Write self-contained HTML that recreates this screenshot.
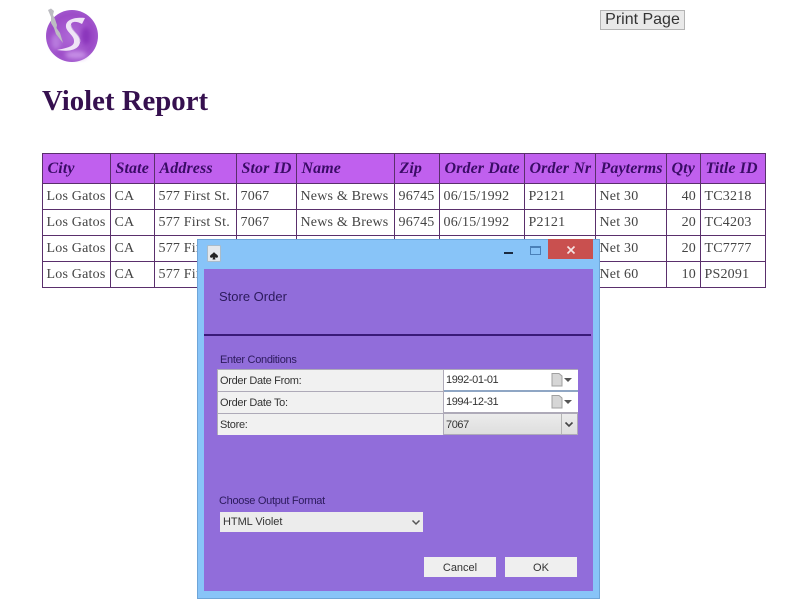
<!DOCTYPE html>
<html><head><meta charset="utf-8"><title>Violet Report</title>
<style>
html,body{margin:0;padding:0;background:#fff;width:800px;height:600px;overflow:hidden}
body{position:relative;font-family:"Liberation Serif",serif;filter:blur(.35px)}
.a{position:absolute;white-space:nowrap}
h1{position:absolute;left:42px;top:85px;margin:0;font:bold 28.8px/32px "Liberation Serif",serif;color:#36104f;white-space:nowrap}
.print{position:absolute;left:600px;top:10px;width:83px;height:18px;background:#e9e9e9;border:1px solid #b4b4b4;font:16px/18px "Liberation Sans",sans-serif;color:#333;text-align:center}
table{position:absolute;left:42px;top:153px;border-collapse:collapse;table-layout:fixed;width:723px;font-size:14px;color:#444}
td,th{border:1px solid #5a2f6c;padding:0 0 0 3.5px;white-space:nowrap;overflow:hidden;text-align:left;height:25px;line-height:25px;letter-spacing:.2px}
th{background:#c060ee;color:#3a0c66;font-style:italic;font-weight:bold;font-size:16px;height:28.5px;letter-spacing:.1px;padding-left:4.5px}
td.r{text-align:right;padding:0 4px 0 0}
.dlg{position:absolute;left:197px;top:239px;width:401px;height:358px;background:#88c4f8;border:1px solid #6ea5d8}
.in{position:absolute;left:6px;top:29px;width:389px;height:322px;background:#916dda}
.s{font-family:"Liberation Sans",sans-serif;color:#2c1a5c}
.box{position:absolute;left:217px;top:369px;width:361px;height:66px;background:#aeaab8}
.row{position:absolute;left:218px;width:224.5px;height:21px;background:#f1f1f1;font:11px/23px "Liberation Sans",sans-serif;letter-spacing:-.3px;color:#333;text-indent:2px;overflow:hidden}
.val{position:absolute;left:444px;width:134px;height:20px;background:#fff;font:11px/21px "Liberation Sans",sans-serif;letter-spacing:-.4px;color:#333;text-indent:2px;overflow:hidden}
.btn{position:absolute;top:557px;height:20px;width:72px;background:#efefef;border:0;font:11px/22px "Liberation Sans",sans-serif;color:#333;text-align:center}
</style></head><body>

<svg class="a" style="left:42px;top:6px" width="60" height="60" viewBox="0 0 60 60">
<defs>
<radialGradient id="g" cx="50%" cy="50%" r="55%"><stop offset="0" stop-color="#b06ad8"/><stop offset=".75" stop-color="#9d4cc8"/><stop offset="1" stop-color="#a25ccf"/></radialGradient>
<filter id="b"><feGaussianBlur stdDeviation="2.5"/></filter>
</defs>
<circle cx="30" cy="30" r="26" fill="url(#g)"/>
<g filter="url(#b)"><ellipse cx="34" cy="49" rx="11" ry="4" fill="#c68fe6"/><ellipse cx="44" cy="30" rx="5" ry="9" fill="#8a35bb"/><ellipse cx="14" cy="36" rx="5" ry="8" fill="#b87ade"/></g>
<path d="M6 4 L9 2.5 L12 5 L11 9 L13 13 L15 19 L14.5 22 L18 27 L21 37 L14 28 L12 22 L9 17 L9 11 Z" fill="#bdbdc2"/>
<path d="M43 12 C34 11 25 13 24 19 C23 26 33 29 32 36 C31.5 41 24 42 15 44 C27 46 37 44 38 36 C39 29 29 25 29 19 C29 15 35 15 40 18 Z" fill="#efe4f6"/>
<path d="M29 19 C29 25 39 29 38 36" fill="none" stroke="#c9a7e0" stroke-width=".8"/>
</svg>

<h1>Violet Report</h1>
<div class="print">Print Page</div>

<table>
<colgroup><col style="width:68px"><col style="width:44px"><col style="width:82px"><col style="width:60px"><col style="width:98px"><col style="width:45px"><col style="width:85px"><col style="width:71px"><col style="width:71px"><col style="width:34px"><col style="width:65px"></colgroup>
<tr><th>City</th><th>State</th><th>Address</th><th>Stor ID</th><th>Name</th><th>Zip</th><th>Order Date</th><th>Order Nr</th><th>Payterms</th><th>Qty</th><th>Title ID</th></tr>
<tr><td>Los Gatos</td><td>CA</td><td>577 First St.</td><td>7067</td><td>News &amp; Brews</td><td>96745</td><td>06/15/1992</td><td>P2121</td><td>Net 30</td><td class="r">40</td><td>TC3218</td></tr>
<tr><td>Los Gatos</td><td>CA</td><td>577 First St.</td><td>7067</td><td>News &amp; Brews</td><td>96745</td><td>06/15/1992</td><td>P2121</td><td>Net 30</td><td class="r">20</td><td>TC4203</td></tr>
<tr><td>Los Gatos</td><td>CA</td><td>577 First St.</td><td>7067</td><td>News &amp; Brews</td><td>96745</td><td>06/15/1992</td><td>P2121</td><td>Net 30</td><td class="r">20</td><td>TC7777</td></tr>
<tr><td>Los Gatos</td><td>CA</td><td>577 First St.</td><td>7067</td><td>News &amp; Brews</td><td>96745</td><td>06/15/1992</td><td>P2121</td><td>Net 60</td><td class="r">10</td><td>PS2091</td></tr>
</table>

<div class="dlg"><div class="in"></div></div>

<!-- title bar -->
<svg class="a" style="left:207px;top:245px" width="15" height="18" viewBox="0 0 15 18">
<rect x=".5" y=".5" width="13" height="16" rx="1" fill="#e4e8ec" stroke="#a9bccb"/>
<path d="M7 7 C8 9 11 9.500 11 11.500 C11 13 9 13 7.800 12.300 L8.500 14.500 L5.500 14.500 L6.200 12.300 C5 13 3 13 3 11.500 C3 9.500 6 9 7 7 Z" fill="#222"/>
</svg>
<div class="a" style="left:504px;top:252px;width:9px;height:2px;background:#1a2a40"></div>
<div class="a" style="left:530px;top:246px;width:9px;height:6px;border:1px solid #4a80b8;border-top-width:2px"></div>
<div class="a" style="left:548px;top:239px;width:45px;height:20px;background:#c9504f"></div>
<svg class="a" style="left:566px;top:245px" width="10" height="10" viewBox="0 0 10 10"><path d="M1.500 1.500 L8.500 8.500 M8.500 1.500 L1.500 8.500" stroke="#f6e4e4" stroke-width="1.6"/></svg>

<div class="a s" style="left:219px;top:289px;font-size:13px;line-height:15px">Store Order</div>
<div class="a" style="left:204px;top:334px;width:387px;height:1.5px;background:#3a1a78"></div>
<div class="a s" style="left:220px;top:353px;font-size:11px;line-height:14px;letter-spacing:-.3px">Enter Conditions</div>

<div class="box"></div>
<div class="row" style="top:370px">Order Date From:</div>
<div class="row" style="top:392px">Order Date To:</div>
<div class="row" style="top:414px">Store:</div>

<div class="val" style="top:370px">1992-01-01</div>
<div class="val" style="top:392px">1994-12-31</div>
<div class="val" style="top:414px;height:20px;width:133px;background:linear-gradient(#ececec,#dedede);line-height:22px">7067</div>
<div class="a" style="left:444px;top:389.500px;width:134px;height:2px;background:#8fa6c4"></div>
<div class="a" style="left:561px;top:414px;width:1px;height:20px;background:#b5b5b5"></div>

<svg class="a" style="left:550px;top:372px" width="26" height="16" viewBox="0 0 26 16"><path d="M2 1.500 H9 L12 4 V14 H2 Z" fill="#d6d6d6" stroke="#a0a0a0"/><path d="M14 6 L22 6 L18 10 Z" fill="#555"/></svg>
<svg class="a" style="left:550px;top:394px" width="26" height="16" viewBox="0 0 26 16"><path d="M2 1.500 H9 L12 4 V14 H2 Z" fill="#d6d6d6" stroke="#a0a0a0"/><path d="M14 6 L22 6 L18 10 Z" fill="#555"/></svg>
<svg class="a" style="left:564px;top:421px" width="10" height="8" viewBox="0 0 10 8"><path d="M1.500 1.500 L5 5 L8.500 1.500" fill="none" stroke="#444" stroke-width="1.6"/></svg>

<div class="a s" style="left:219px;top:494px;font-size:11px;line-height:14px;letter-spacing:-.3px">Choose Output Format</div>
<div class="a" style="left:220px;top:512px;width:203px;height:20px;background:#ececec;font:11px/21px 'Liberation Sans',sans-serif;letter-spacing:-.05px;color:#333;text-indent:3px">HTML Violet</div>
<svg class="a" style="left:411px;top:519px" width="10" height="8" viewBox="0 0 10 8"><path d="M1.500 1.500 L5 5 L8.500 1.500" fill="none" stroke="#555" stroke-width="1.500"/></svg>

<div class="btn" style="left:424px">Cancel</div>
<div class="btn" style="left:505px">OK</div>
</body></html>
